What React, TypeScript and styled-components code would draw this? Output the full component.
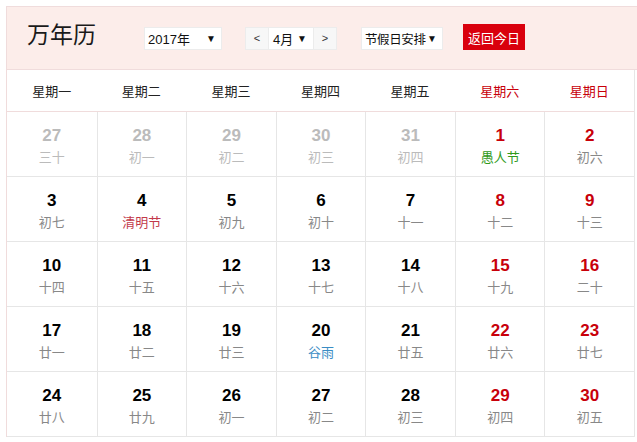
import React from 'react';
import styled, { createGlobalStyle } from 'styled-components';

const GlobalStyle = createGlobalStyle`
  html, body {
    margin: 0;
    padding: 0;
    background: #fff;
    font-family: "Liberation Sans", "Noto Sans CJK SC", sans-serif;
    overflow: hidden;
  }
`;

const Page = styled.div`
  padding: 6px 0 0 6px;
`;

const Wrapper = styled.div`
  border-top: 1px solid #f0dcdc;
  border-left: 1px solid #f0dcdc;
`;

const Header = styled.div`
  height: 62px;
  background: #fcedea;
  border-bottom: 1px solid #f0dcdc;
  display: flex;
  align-items: center;
  padding-left: 20px;
`;

const Title = styled.h1`
  margin: 0 48px 0 0;
  font-size: 23px;
  font-weight: normal;
  color: #1a1a1a;
  line-height: 1;
  position: relative;
  top: -3px;
`;

const SelectBox = styled.div<{ $width: number }>`
  width: ${p => p.$width}px;
  height: 23px;
  box-sizing: border-box;
  background: #fff;
  border: 1px solid #ececec;
  display: flex;
  align-items: center;
  justify-content: space-between;
  padding: 0 5px 0 3px;
  font-size: 13px;
  color: #111;
  white-space: nowrap;
`;

const Tight = styled.span`
  font-size: 12.5px;
  letter-spacing: -0.4px;
`;

const Arrow = styled.span`
  font-size: 10px;
  color: #111;
`;

const MonthGroup = styled.div`
  display: flex;
  height: 23px;
  margin: 0 24px 0 23px;
  border: 1px solid #ececec;
  box-sizing: border-box;
`;

const NavButton = styled.div`
  width: 22px;
  background: #f7f7f7;
  display: flex;
  align-items: center;
  justify-content: center;
  font-size: 11px;
  color: #333;
`;

const MonthSelect = styled.div`
  width: 46px;
  background: #fff;
  border-left: 1px solid #ececec;
  border-right: 1px solid #ececec;
  display: flex;
  align-items: center;
  justify-content: space-between;
  padding: 0 6px 0 4px;
  box-sizing: border-box;
  font-size: 13px;
  color: #111;
`;

const TodayButton = styled.button`
  margin-left: 20px;
  width: 62px;
  height: 26px;
  border: none;
  background: #d9000d;
  color: #fff;
  font-family: inherit;
  font-size: 13px;
  padding: 0;
  position: relative;
  top: -1px;
`;

const Body = styled.div`
  width: 627px;
  border-right: 1px solid #e6e6e6;
`;

const WeekRow = styled.div`
  display: grid;
  grid-template-columns: repeat(7, 1fr);
  height: 41px;
  border-bottom: 1px solid #f0dcdc;
`;

const WeekLabel = styled.div<{ $weekend: boolean }>`
  display: flex;
  align-items: center;
  justify-content: center;
  font-size: 13px;
  color: ${p => (p.$weekend ? '#c8000a' : '#222')};
`;

const Grid = styled.div`
  display: grid;
  grid-template-columns: repeat(7, 1fr);
`;

const Cell = styled.div`
  height: 65px;
  box-sizing: border-box;
  border-bottom: 1px solid #e6e6e6;
  border-left: 1px solid #e6e6e6;
  display: flex;
  flex-direction: column;
  align-items: center;
  padding-top: 14px;

  &:nth-child(7n + 1) {
    border-left: none;
  }
`;

type Tone = 'other' | 'normal' | 'weekend';

const DayNum = styled.div<{ $tone: Tone }>`
  font-size: 17px;
  font-weight: bold;
  line-height: 20px;
  color: ${p => (p.$tone === 'other' ? '#bbb' : p.$tone === 'weekend' ? '#c8000a' : '#000')};
`;

type Kind = 'plain' | 'festival' | 'solar' | 'fool';

const Lunar = styled.div<{ $kind: Kind; $other: boolean }>`
  margin-top: 3px;
  font-size: 13px;
  line-height: 18px;
  color: ${p => {
    if (p.$other) return '#bbb';
    switch (p.$kind) {
      case 'festival':
        return '#c2394a';
      case 'fool':
        return '#2f9a1a';
      case 'solar':
        return '#3a8cc4';
      default:
        return '#888';
    }
  }};
`;

interface Day {
  n: number;
  lunar: string;
  other?: boolean;
  kind?: Kind;
}

const weeks = ['星期一', '星期二', '星期三', '星期四', '星期五', '星期六', '星期日'];

const days: Day[] = [
  { n: 27, lunar: '三十', other: true },
  { n: 28, lunar: '初一', other: true },
  { n: 29, lunar: '初二', other: true },
  { n: 30, lunar: '初三', other: true },
  { n: 31, lunar: '初四', other: true },
  { n: 1, lunar: '愚人节', kind: 'fool' },
  { n: 2, lunar: '初六' },
  { n: 3, lunar: '初七' },
  { n: 4, lunar: '清明节', kind: 'festival' },
  { n: 5, lunar: '初九' },
  { n: 6, lunar: '初十' },
  { n: 7, lunar: '十一' },
  { n: 8, lunar: '十二' },
  { n: 9, lunar: '十三' },
  { n: 10, lunar: '十四' },
  { n: 11, lunar: '十五' },
  { n: 12, lunar: '十六' },
  { n: 13, lunar: '十七' },
  { n: 14, lunar: '十八' },
  { n: 15, lunar: '十九' },
  { n: 16, lunar: '二十' },
  { n: 17, lunar: '廿一' },
  { n: 18, lunar: '廿二' },
  { n: 19, lunar: '廿三' },
  { n: 20, lunar: '谷雨', kind: 'solar' },
  { n: 21, lunar: '廿五' },
  { n: 22, lunar: '廿六' },
  { n: 23, lunar: '廿七' },
  { n: 24, lunar: '廿八' },
  { n: 25, lunar: '廿九' },
  { n: 26, lunar: '初一' },
  { n: 27, lunar: '初二' },
  { n: 28, lunar: '初三' },
  { n: 29, lunar: '初四' },
  { n: 30, lunar: '初五' },
];

const App: React.FC = () => {
  return (
    <Page>
      <GlobalStyle />
      <Wrapper>
        <Header>
          <Title>万年历</Title>
          <SelectBox $width={78}>
            <span>2017年</span>
            <Arrow>▼</Arrow>
          </SelectBox>
          <MonthGroup>
            <NavButton>&lt;</NavButton>
            <MonthSelect>
              <span>4月</span>
              <Arrow>▼</Arrow>
            </MonthSelect>
            <NavButton>&gt;</NavButton>
          </MonthGroup>
          <SelectBox $width={82}>
            <Tight>节假日安排</Tight>
            <Arrow>▼</Arrow>
          </SelectBox>
          <TodayButton>返回今日</TodayButton>
        </Header>
        <Body>
          <WeekRow>
            {weeks.map((w, i) => (
              <WeekLabel key={w} $weekend={i >= 5}>
                {w}
              </WeekLabel>
            ))}
          </WeekRow>
          <Grid>
            {days.map((d, i) => {
              const weekend = i % 7 >= 5;
              const tone: Tone = d.other ? 'other' : weekend ? 'weekend' : 'normal';
              return (
                <Cell key={i}>
                  <DayNum $tone={tone}>{d.n}</DayNum>
                  <Lunar $kind={d.kind ?? 'plain'} $other={!!d.other}>
                    {d.lunar}
                  </Lunar>
                </Cell>
              );
            })}
          </Grid>
        </Body>
      </Wrapper>
    </Page>
  );
};

export default App;
